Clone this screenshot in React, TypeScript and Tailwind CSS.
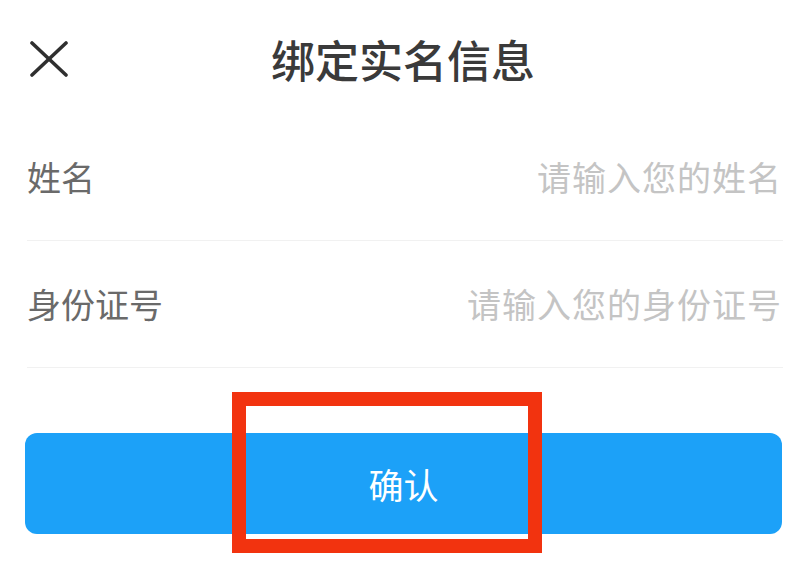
import React from 'react';

const font = { fontFamily: '"Noto Sans CJK SC", "Noto Sans", sans-serif' };

function CloseIcon() {
  return (
    <svg width="40" height="36" viewBox="0 0 40 36" fill="none" stroke="#2f2f2f" strokeWidth="3.6" strokeLinecap="round">
      <line x1="3" y1="2" x2="37" y2="34" />
      <line x1="37" y1="2" x2="3" y2="34" />
    </svg>
  );
}

function Field({ label, placeholder, wide }: { label: string; placeholder: string; wide?: boolean }) {
  return (
    <div className="h-[127px] flex items-center justify-between border-b border-[#f1f1f1]">
      <span className="text-[34px] leading-none text-[#6a6a6a]">{label}</span>
      <span className={`text-[34px] leading-none text-[#c4c4c4] pr-[2px] ${wide ? 'tracking-[1px] mr-[-1px]' : 'tracking-[1px] mr-[-1px]'}`}>
        {placeholder}
      </span>
    </div>
  );
}

export default function App() {
  return (
    <div className="w-[800px] h-[584px] bg-white overflow-hidden" style={font}>
      <div className="h-[114px] flex items-center px-[29px] pt-[4px]">
        <div className="w-[40px]">
          <CloseIcon />
        </div>
        <h1 className="flex-1 text-center text-[44px] leading-none text-[#3a3a3a] font-medium pr-[34px]">
          绑定实名信息
        </h1>
      </div>

      <div className="pl-[27px] pr-[17px]">
        <Field label="姓名" placeholder="请输入您的姓名" />
        <Field label="身份证号" placeholder="请输入您的身份证号" wide />
      </div>

      <div className="pl-[25px] pr-[18px] mt-[65px] relative">
        <button className="w-full h-[101px] rounded-[12px] bg-[#1ca1f8] text-white text-[35px] leading-none flex items-center justify-center">
          确认
        </button>
        <div className="absolute left-[232px] top-[-41px] w-[310px] h-[161px] border-[14px] border-[#f2330f] pointer-events-none" />
      </div>
    </div>
  );
}
